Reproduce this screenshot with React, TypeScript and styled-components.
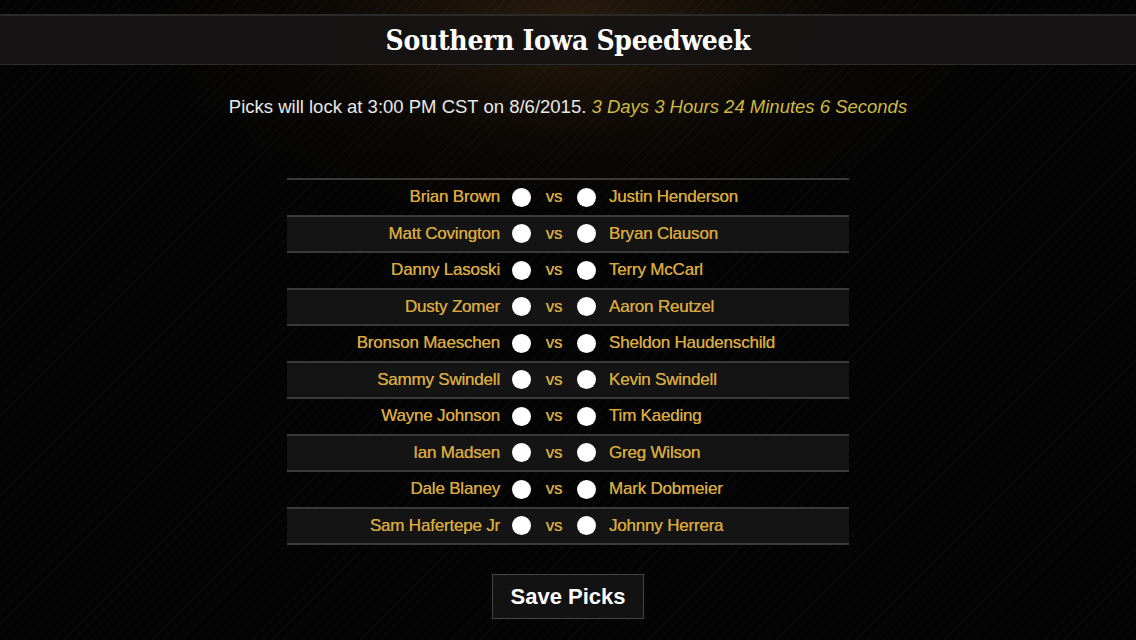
import React from "react";
import styled, { createGlobalStyle } from "styled-components";

const Global = createGlobalStyle`
  html, body { margin: 0; padding: 0; background: #040404; }
  body { font-family: "Liberation Sans", Arial, sans-serif; }
`;

const Page = styled.div`
  width: 1136px;
  height: 640px;
  overflow: hidden;
  display: flex;
  flex-direction: column;
  align-items: center;
  background:
    repeating-linear-gradient(135deg, rgba(255,255,255,0.018) 0 1px, transparent 1px 7px),
    radial-gradient(ellipse 420px 200px at 570px 20px, rgba(70,45,20,0.55), rgba(40,25,10,0.2) 60%, transparent 100%),
    #040404;
`;

const HeaderBar = styled.header`
  margin-top: 14px;
  width: 100%;
  height: 48px;
  box-sizing: content-box;
  border-top: 2px solid #2c2a28;
  border-bottom: 1px solid #2e2c2a;
  background: rgba(22, 20, 19, 0.92);
  display: flex;
  align-items: center;
  justify-content: center;
`;

const Title = styled.h1`
  margin: 0;
  font-family: "DejaVu Serif Condensed", "DejaVu Serif", serif;
  font-weight: bold;
  font-size: 28px;
  color: #ffffff;
  letter-spacing: -0.3px;
`;

const LockLine = styled.p`
  margin: 31px 0 0;
  font-size: 18.5px;
  color: #e8e8e8;
`;

const Countdown = styled.span`
  font-style: italic;
  color: #cdb941;
`;

const Table = styled.div`
  margin-top: 60px;
  width: 562px;
  border-top: 2px solid #3a3a3a;
`;

const Row = styled.div<{ $alt: boolean }>`
  display: grid;
  grid-template-columns: 225px 19px 46px 19px 1fr;
  align-items: center;
  height: 34.5px;
  border-bottom: 2px solid #3a3a3a;
  background: ${(p) => (p.$alt ? "#141414" : "transparent")};
  font-size: 17px;
  letter-spacing: -0.2px;
  color: #d9a93c;
  text-shadow: 0 0 0.4px #d9a93c;
`;

const LeftName = styled.span`
  text-align: right;
  padding-right: 12px;
`;

const RightName = styled.span`
  padding-left: 13px;
`;

const Radio = styled.span`
  width: 19px;
  height: 19px;
  border-radius: 50%;
  background: #ffffff;
`;

const Vs = styled.span`
  text-align: center;
`;

const SaveButton = styled.button`
  margin-top: 29px;
  width: 152px;
  height: 45px;
  background: #121212;
  border: 1px solid #444;
  color: #ffffff;
  font-family: "Liberation Sans", Arial, sans-serif;
  font-weight: bold;
  font-size: 22px;
  padding: 0;
`;

const matchups: [string, string][] = [
  ["Brian Brown", "Justin Henderson"],
  ["Matt Covington", "Bryan Clauson"],
  ["Danny Lasoski", "Terry McCarl"],
  ["Dusty Zomer", "Aaron Reutzel"],
  ["Bronson Maeschen", "Sheldon Haudenschild"],
  ["Sammy Swindell", "Kevin Swindell"],
  ["Wayne Johnson", "Tim Kaeding"],
  ["Ian Madsen", "Greg Wilson"],
  ["Dale Blaney", "Mark Dobmeier"],
  ["Sam Hafertepe Jr", "Johnny Herrera"],
];

export default function App() {
  return (
    <>
      <Global />
      <Page>
        <HeaderBar>
          <Title>Southern Iowa Speedweek</Title>
        </HeaderBar>
        <LockLine>
          Picks will lock at 3:00 PM CST on 8/6/2015.{" "}
          <Countdown>3 Days 3 Hours 24 Minutes 6 Seconds</Countdown>
        </LockLine>
        <Table>
          {matchups.map(([a, b], i) => (
            <Row key={a} $alt={i % 2 === 1}>
              <LeftName>{a}</LeftName>
              <Radio />
              <Vs>vs</Vs>
              <Radio />
              <RightName>{b}</RightName>
            </Row>
          ))}
        </Table>
        <SaveButton>Save Picks</SaveButton>
      </Page>
    </>
  );
}
